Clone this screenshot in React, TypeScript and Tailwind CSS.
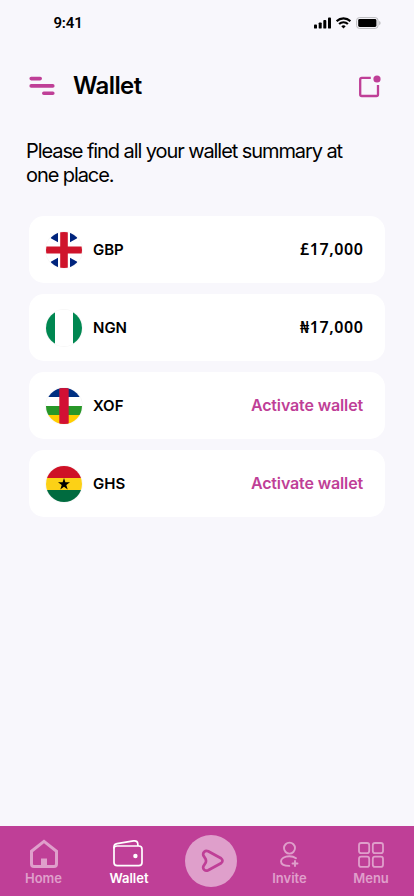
import React from 'react';

interface Wallet {
  code: string;
  amount?: string;
  flag: React.ReactNode;
}

const WALLETS: Wallet[] = [
  {
    code: 'GBP',
    amount: '£17,000',
    flag: (
      <>
        <rect width="36" height="36" fill="#fff" />
        <path d="M12 0V10.2L4.8 6.2V0ZM24 0V10.2L31.2 6.2V0ZM12 36V25.8L4.8 29.8V36ZM24 36V25.8L31.2 29.8V36Z" fill="#00247d" />
        <path d="M14.2 0H21.8V14.5H36V21.5H21.8V36H14.2V21.5H0V14.5H14.2Z" fill="#cf142b" />
      </>
    ),
  },
  {
    code: 'NGN',
    amount: '₦17,000',
    flag: (
      <>
        <rect width="36" height="36" fill="#fff" />
        <path d="M0 0H9V36H0ZM27 0H36V36H27Z" fill="#008751" />
      </>
    ),
  },
  {
    code: 'XOF',
    flag: (
      <>
        <rect width="36" height="36" fill="#fff" />
        <rect width="36" height="9" fill="#003082" />
        <rect y="18" width="36" height="9" fill="#289728" />
        <rect y="27" width="36" height="9" fill="#ffce00" />
        <rect x="13.3" width="9.4" height="36" fill="#d21034" />
      </>
    ),
  },
  {
    code: 'GHS',
    flag: (
      <>
        <rect width="36" height="12" fill="#ce1126" />
        <rect y="12" width="36" height="12" fill="#fcd116" />
        <rect y="24" width="36" height="12" fill="#006b3f" />
        <path d="M18 12L19.4 16.3H24L20.3 19L21.7 23.4L18 20.7L14.3 23.4L15.7 19L12 16.3H16.6Z" fill="#000" />
      </>
    ),
  },
];

const StatusBar = () => (
  <div className="flex h-[46px] items-center justify-between pl-[53.5px] pr-[33px] text-black">
    <span className="font-['Roboto',sans-serif] text-[15px] font-semibold leading-none tracking-[-0.2px]">9:41</span>
    <div className="flex items-center gap-[5px]">
      <svg width="17" height="12" viewBox="0 0 17 12" fill="currentColor">
        <rect y="7.4" width="3" height="4.2" rx="0.9" />
        <rect x="4.7" y="5.4" width="3" height="6.2" rx="0.9" />
        <rect x="9.3" y="3" width="3" height="8.6" rx="0.9" />
        <rect x="14" y="0.6" width="3" height="11" rx="0.9" />
      </svg>
      <svg width="15" height="12" viewBox="0 0 15 12" fill="none" stroke="currentColor" strokeWidth="2.1">
        <path d="M0.6 4.2A9.8 9.8 0 0 1 14.4 4.2" />
        <path d="M3.1 7.1A6.2 6.2 0 0 1 11.9 7.1" />
        <path d="M5.3 9.2A3.2 3.2 0 0 1 9.7 9.2L7.5 11.4Z" fill="currentColor" stroke="none" />
      </svg>
      <svg width="25" height="12" viewBox="0 0 25 12">
        <rect x="0.6" y="0.6" width="21.4" height="10.8" rx="2.8" fill="none" stroke="#b9b9bc" />
        <rect x="2.2" y="2.1" width="18.2" height="7.8" rx="1.4" fill="#000" />
        <path d="M23.2 4V8.2Q24.6 7.5 24.6 6.1T23.2 4Z" fill="#b9b9bc" />
      </svg>
    </div>
  </div>
);

const Header = () => (
  <header className="flex h-20 items-center pl-[29px] pr-[33px]">
    <svg width="26" height="20" viewBox="0 0 26 20" fill="none" stroke="#bf3f97" strokeWidth="3.6" strokeLinecap="round">
      <path d="M2.2 2.6H11.2M2.2 9.9H23.8M14.8 17.2H23.8" />
    </svg>
    <h1 className="ml-[18px] text-2xl font-semibold leading-none tracking-[-0.6px]">Wallet</h1>
    <svg className="ml-auto" width="23" height="23" viewBox="0 0 23 23" fill="none">
      <path d="M12.8 2.8H3.8Q2.2 2.8 2.2 4.4V19.4Q2.2 21 3.8 21H18.4Q20 21 20 19.4V10" stroke="#bf3f97" strokeWidth="2.3" />
      <circle cx="19" cy="4" r="3.6" fill="#bf3f97" />
    </svg>
  </header>
);

const WalletRow = ({ code, amount, flag }: Wallet) => (
  <button className="flex h-[67px] w-full items-center rounded-[15px] bg-white pl-[17px] pr-[22px]">
    <svg className="overflow-hidden rounded-full ring-1 ring-black/[0.03]" width="36" height="36" viewBox="0 0 36 36">
      {flag}
    </svg>
    <span className="ml-[11px] text-[15px] font-semibold leading-[21px]">{code}</span>
    {amount ? (
      <span className="-mr-[0.5px] ml-auto pb-px font-['Noto_Sans',sans-serif] text-base font-semibold leading-6 tracking-[0.6px]">
        {amount}
      </span>
    ) : (
      <span className="ml-auto text-base font-semibold leading-[23px] tracking-[-0.13px] text-[#bf3f97]">
        Activate wallet
      </span>
    )}
  </button>
);

const HomeIcon = () => (
  <svg width="30" height="30" viewBox="0 0 30 30" fill="none">
    <path d="M2.5 12.2L15 2.4L27.5 12.2V25Q27.5 27.5 25 27.5H5Q2.5 27.5 2.5 25Z" stroke="currentColor" strokeWidth="3" />
    <path d="M12 19.5H18V28H12Z" fill="currentColor" />
  </svg>
);

const WalletIcon = () => (
  <svg className="-ml-0.5" width="30" height="30" viewBox="0 0 30 30" fill="none" stroke="currentColor" strokeWidth="1.7">
    <path d="M1 8.5V23.5Q1 26.7 4.2 26.7H25.8Q29 26.7 29 23.5V10.2Q29 7 25.8 7H4Q1 7 1 9.5" />
    <path d="M1 9.5V8Q1 5.2 4 4.7L20.5 1.9Q24.2 1.3 24.7 4.2L25 7" />
    <circle cx="22.4" cy="17" r="2.2" fill="currentColor" stroke="none" />
  </svg>
);

const InviteIcon = () => (
  <svg width="30" height="30" viewBox="0 0 30 30" fill="none" stroke="currentColor" strokeWidth="1.9" strokeLinecap="round">
    <circle cx="14.5" cy="9.1" r="5.5" />
    <path d="M21 19.2Q18.4 17.2 14.3 17.2C9.5 17.2 6 19.5 6 22.3C6 25.3 9.8 26.9 14.3 26.9M20 22V27M17.5 24.5H22.5" />
  </svg>
);

const MenuIcon = () => (
  <svg className="-ml-px" width="30" height="30" viewBox="0 0 30 30" fill="none" stroke="currentColor" strokeWidth="1.8">
    <rect x="3" y="4" width="10.2" height="10.2" rx="2.2" />
    <rect x="16.8" y="4" width="10.2" height="10.2" rx="2.2" />
    <rect x="3" y="17.7" width="10.2" height="10.2" rx="2.2" />
    <rect x="16.8" y="17.7" width="10.2" height="10.2" rx="2.2" />
  </svg>
);

interface TabProps {
  label: string;
  icon: React.FC;
  active?: boolean;
}

const Tab = ({ label, icon: Icon, active }: TabProps) => (
  <button className={`flex flex-col items-center pt-[13px] ${active ? 'text-white' : 'text-[#df9fcb]'}`}>
    <Icon />
    <span className="mt-px text-[13px] font-semibold leading-4">{label}</span>
  </button>
);

const BottomNav = () => (
  <nav className="mt-auto grid h-[70px] grid-cols-[87px_84px_80px_77px_86px] bg-[#bf3f97]">
    <Tab label="Home" icon={HomeIcon} />
    <Tab label="Wallet" icon={WalletIcon} active />
    <button className="mt-[9px] flex size-[52px] items-center justify-center justify-self-center rounded-full bg-[#df9fcb]">
      <svg className="ml-1" width="24" height="24" viewBox="0 0 24 24" fill="none" stroke="#bf3f97" strokeWidth="2.7" strokeLinejoin="round">
        <path d="M7.2 2.3L20 9.3Q23 11.7 20 14.2L7.2 21.2C4 22.5 1.4 20 2.4 17.2L4.6 13.8Q5.4 12 4.6 10L2.4 6.5C1.4 3.5 4.2 0.8 7.2 2.3Z" />
      </svg>
    </button>
    <Tab label="Invite" icon={InviteIcon} />
    <Tab label="Menu" icon={MenuIcon} />
  </nav>
);

export default function App() {
  return (
    <div className="flex h-[896px] w-[414px] flex-col bg-[#f8f7fc] font-['Inter','Liberation_Sans',sans-serif] text-black">
      <StatusBar />
      <Header />
      <p className="mt-[13px] pl-[26px] text-xl leading-6 tracking-[-1.08px]">
        Please find all your wallet summary at
        <br />
        one place.
      </p>
      <main className="mt-[29px] flex flex-col gap-[11px] px-[29px]">
        {WALLETS.map((wallet) => (
          <WalletRow key={wallet.code} {...wallet} />
        ))}
      </main>
      <BottomNav />
    </div>
  );
}
